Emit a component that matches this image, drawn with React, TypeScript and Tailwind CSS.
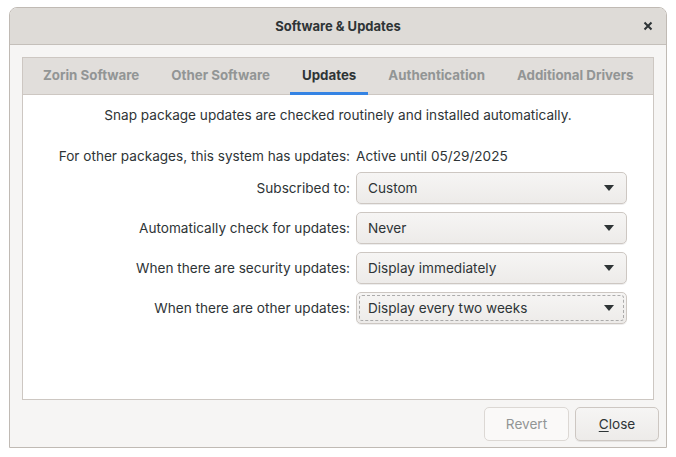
import React from "react";

const font = { fontFamily: "Inter, 'Noto Sans', 'DejaVu Sans', sans-serif" };

function Arrow() {
  return (
    <svg width="10" height="6" viewBox="0 0 10 6" className="shrink-0">
      <path d="M0 0 L10 0 L5 6 Z" fill="#2e3436" />
    </svg>
  );
}

function Combo({ value, focused }: { value: string; focused?: boolean }) {
  return (
    <div className="relative h-[32px] w-[271px] rounded-[5px] border border-[#cdc7c2] bg-gradient-to-b from-[#f6f5f4] to-[#edebe9] shadow-[0_1px_0_rgba(0,0,0,0.07)] flex items-center pl-[11px] pr-[12px] text-[13.6px] text-[#2e3436]">
      <span className="flex-1">{value}</span>
      <Arrow />
      {focused && (
        <div className="absolute inset-[2px] rounded-[3px] border border-dashed border-[#8f8f8f] opacity-70" />
      )}
    </div>
  );
}

export default function App() {
  const tabs = ["Zorin Software", "Other Software", "Updates", "Authentication", "Additional Drivers"];
  const rows: [string, string, boolean?][] = [
    ["Subscribed to:", "Custom"],
    ["Automatically check for updates:", "Never"],
    ["When there are security updates:", "Display immediately"],
    ["When there are other updates:", "Display every two weeks", true],
  ];
  return (
    <div className="w-[676px] h-[457px] bg-white pt-[7px] pl-[9px]" style={font}>
      <div className="w-[658px] h-[441px] border border-[#c0bab4] rounded-t-[8px] bg-[#f6f5f4] flex flex-col overflow-hidden">
        <div className="h-[37px] shrink-0 bg-[#dedbd7] border-b border-[#c4bfba] flex items-center relative">
          <div className="flex-1 text-center text-[13px] font-bold text-[#2e3436] pt-[2px]">Software &amp; Updates</div>
          <div className="absolute right-[13px] top-[10px] leading-none">
            <svg width="10" height="10" viewBox="0 0 10 10" className="mt-[3px]">
              <path d="M1.5 1.5 L8.5 8.5 M8.5 1.5 L1.5 8.5" stroke="#2e3436" strokeWidth="2" />
            </svg>
          </div>
        </div>
        <div className="flex-1 flex flex-col pt-[12px] px-[12px]">
          <div className="h-[343px] border border-[#cdc7c2] bg-white flex flex-col">
            <div className="h-[37px] shrink-0 bg-[#e1dedb] border-b border-[#cdc7c2] flex pl-[8px] gap-[8px]">
              {tabs.map((t) => (
                <div
                  key={t}
                  className={
                    t === "Updates"
                      ? "relative px-[12px] flex items-center text-[13.3px] font-bold text-[#2e3436]"
                      : "px-[12px] flex items-center text-[13.3px] font-bold text-[#929595]"
                  }
                >
                  {t}
                  {t === "Updates" && <div className="absolute left-0 right-0 bottom-[-1px] h-[3px] bg-[#3584e4]" />}
                </div>
              ))}
            </div>
            <div className="flex flex-col text-[13.6px] text-[#2e3436]">
              <div className="text-center mt-[11px] h-[18px] leading-[18px]">
                Snap package updates are checked routinely and installed automatically.
              </div>
              <div className="mt-[24px] grid grid-cols-[327px_auto] gap-x-[6px] gap-y-[8px] items-center">
                <div className="text-right leading-[16px] h-[16px] whitespace-nowrap">For other packages, this system has updates:</div>
                <div className="leading-[16px] h-[16px]">Active until 05/29/2025</div>
                {rows.map(([l, v, f]) => (
                  <React.Fragment key={l}>
                    <div className="text-right whitespace-nowrap">{l}</div>
                    <Combo value={v} focused={f} />
                  </React.Fragment>
                ))}
              </div>
            </div>
          </div>
          <div className="flex justify-end gap-[6px] mt-[7px] mr-[-5px]">
            <div className="w-[85px] h-[34px] rounded-[5px] border border-[#dcd8d4] bg-[#faf9f8] flex items-center justify-center text-[13.6px] text-[#929595]">
              Revert
            </div>
            <div className="w-[84px] h-[34px] rounded-[5px] border border-[#cdc7c2] bg-gradient-to-b from-[#f6f5f4] to-[#edebe9] shadow-[0_1px_0_rgba(0,0,0,0.07)] flex items-center justify-center text-[13.6px] text-[#2e3436]">
              <span><span className="underline underline-offset-2">C</span>lose</span>
            </div>
          </div>
        </div>
      </div>
    </div>
  );
}
